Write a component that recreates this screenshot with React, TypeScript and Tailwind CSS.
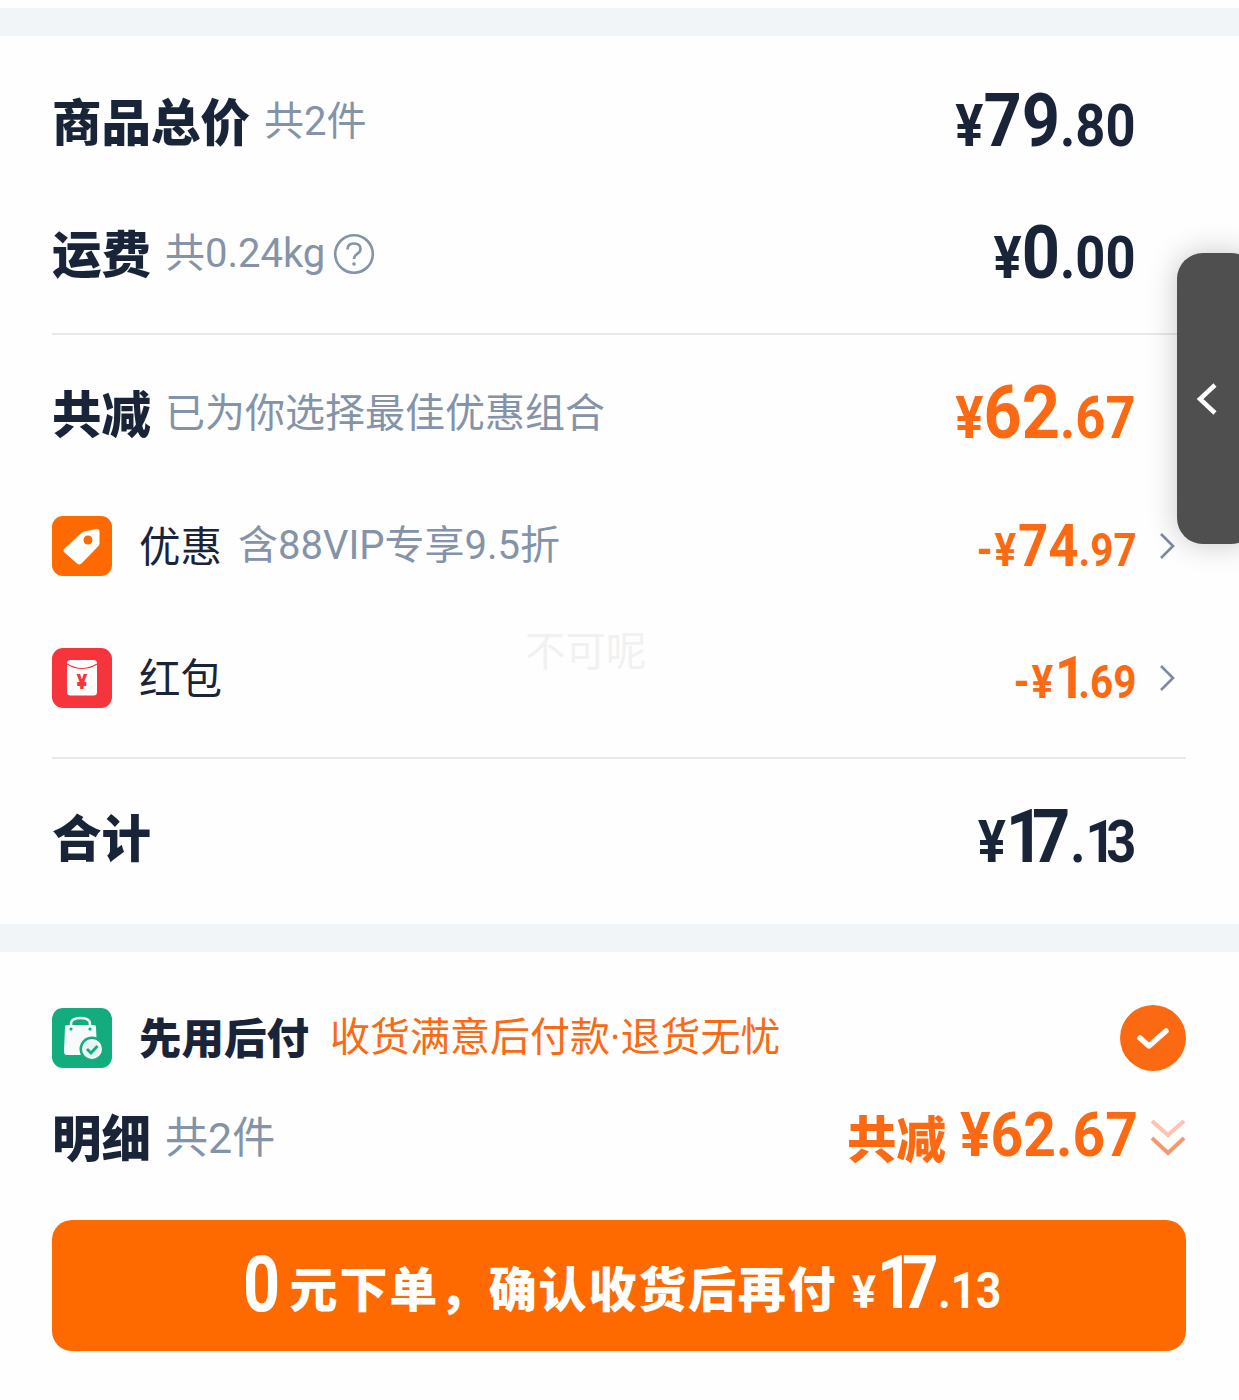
import React from "react";

const DARK = "text-[#1a2438]";
const ORANGE = "text-[#fb6a12]";

function Digits({ s, loose }: { s: string; loose?: boolean }) {
  return (
    <>
      {s.split("").map((c, i) =>
        c === "1" ? (
          <span key={i} className={loose ? "tracking-[-0.13em]" : "tracking-[-0.18em]"}>1</span>
        ) : (
          <span key={i}>{c}</span>
        ),
      )}
    </>
  );
}

function Price({ big, small, color }: { big: string; small: string; color: string }) {
  return (
    <div className={`font-['Roboto',sans-serif] font-bold leading-none whitespace-nowrap inline-block origin-right scale-x-[0.89] pb-[3px] ${color}`}>
      <span className="text-[59px]">¥</span>
      <span className="text-[75px]"><Digits s={big} /></span>
      <span className="text-[59px]"><Digits s={small} /></span>
    </div>
  );
}

function SmallPrice({ big, small }: { big: string; small: string }) {
  return (
    <div className={`font-['Roboto',sans-serif] font-bold leading-none whitespace-nowrap inline-block origin-right scale-x-[0.88] ${ORANGE}`}>
      <span className="text-[46px] tracking-[2px]">-¥</span>
      <span className="text-[60px]"><Digits s={big} loose /></span>
      <span className="text-[46px]">{small}</span>
    </div>
  );
}

const cjk = "font-['Roboto','Noto_Sans_CJK_SC',sans-serif]";
const cjkSans = "font-['Noto_Sans_CJK_SC',sans-serif]";

function Title({ children }: { children: React.ReactNode }) {
  return <span className={`${cjkSans} text-[49.5px] font-black leading-none pb-[5px] ${DARK}`}>{children}</span>;
}
function Sub({ children, big }: { children: React.ReactNode; big?: boolean }) {
  return <span className={`${cjk} ${big ? "text-[43px]" : "text-[40px]"} leading-none text-[#8493a8]`}>{children}</span>;
}

function Chevron() {
  return (
    <svg width="16" height="28" viewBox="0 0 16 28" fill="none" className="shrink-0">
      <path d="M2 2 L14 14 L2 26" stroke="#7b8aa0" strokeWidth="2.6" />
    </svg>
  );
}

function TagIcon() {
  return (
    <svg width="60" height="60" viewBox="0 0 60 60" className="shrink-0">
      <rect width="60" height="60" rx="11" fill="#ff6a00" />
      <path d="M32 15.5 L44 13 Q47.5 12.5 47.5 16 L47.5 27 Q47.5 29 46 30.5 L30 47 Q27.5 49.5 25 47.5 L12.5 36.5 Q10.5 34.5 12.5 32.5 L29.5 17 Q30.5 16 32 15.5 Z" fill="#fff" />
      <circle cx="36" cy="24" r="4.5" fill="#ff6a00" />
    </svg>
  );
}

function PacketIcon() {
  return (
    <svg width="60" height="60" viewBox="0 0 60 60" className="shrink-0">
      <rect width="60" height="60" rx="11" fill="#f5343c" />
      <rect x="15" y="12" width="30" height="35.5" rx="3.5" fill="#fff" />
      <path d="M15 16 Q30 25 45 16" stroke="#f5343c" strokeWidth="1.2" fill="none" />
      <text x="30" y="41" textAnchor="middle" fontSize="20" fontWeight="900" fill="#f5343c" fontFamily="Roboto, sans-serif">¥</text>
    </svg>
  );
}

function BagIcon() {
  return (
    <svg width="60" height="60" viewBox="0 0 60 60" className="shrink-0">
      <rect width="60" height="60" rx="11" fill="#12ac7e" />
      <path d="M15 17 L42 17 Q44 17 44 19 L45 42 Q45 47 41 47 L15 47 Q12 47 12 44 L13 19 Q13 17 15 17 Z" fill="#f4fbf9" />
      <path d="M19 22 L19 16 Q19 10 28.5 10 Q38 10 38 16 L38 22" stroke="#f4fbf9" strokeWidth="2.4" fill="none" />
      <circle cx="19" cy="21" r="1.6" fill="#12ac7e" />
      <circle cx="38" cy="21" r="1.6" fill="#12ac7e" />
      <circle cx="40" cy="41" r="12.5" fill="#12ac7e" />
      <circle cx="40" cy="41" r="9" fill="#e4f6f0" stroke="#fff" strokeWidth="2" />
      <path d="M35 41 L39 45 L45.5 38" stroke="#12ac7e" strokeWidth="2.8" fill="none" />
    </svg>
  );
}

function QuestionIcon() {
  return (
    <svg width="42" height="42" viewBox="0 0 42 42" fill="none" className="shrink-0">
      <circle cx="21" cy="21" r="18.8" stroke="#8493a8" strokeWidth="2.6" />
      <path d="M14.5 16.5 Q14.5 10.5 21 10.5 Q27.5 10.5 27.5 16 Q27.5 19 24 21 Q21 23 21 26" stroke="#8493a8" strokeWidth="2.6" />
      <circle cx="21" cy="31" r="1.8" fill="#8493a8" />
    </svg>
  );
}

function Row({ left, right }: { left: React.ReactNode; right: React.ReactNode }) {
  return (
    <div className="h-[132px] flex items-center justify-between pr-[50px]">
      <div className="flex items-center gap-[14px]">{left}</div>
      <div>{right}</div>
    </div>
  );
}

function IconRow({ icon, label, sub, big, small }: { icon: React.ReactNode; label: string; sub?: string; big: string; small: string }) {
  return (
    <div className="h-[132px] flex items-center justify-between pr-[11px]">
      <div className="flex items-center">
        {icon}
        <span className={`${cjkSans} ml-[27px] pb-[3px] text-[41.5px] leading-none ${DARK}`}>{label}</span>
        {sub && <span className="ml-4"><Sub>{sub}</Sub></span>}
      </div>
      <div className="flex items-center gap-[22px]">
        <SmallPrice big={big} small={small} />
        <Chevron />
      </div>
    </div>
  );
}

function Divider() {
  return <div className="h-[2px] my-[13px] bg-[#e6e8ec]" />;
}

export default function App() {
  return (
    <div className="relative w-[1239px] h-[1400px] overflow-hidden bg-[#fefefe]">
      <div className="h-2" />
      <div className="h-[28px] bg-[#f1f5f8]" />

      <section className="pl-[52px] pr-[53px] py-5">
        <Row
          left={<><Title>商品总价</Title><Sub>共2件</Sub></>}
          right={<Price big="79" small=".80" color={DARK} />}
        />
        <Row
          left={<><Title>运费</Title><Sub>共0.24kg</Sub><span className="-ml-[6px]"><QuestionIcon /></span></>}
          right={<Price big="0" small=".00" color={DARK} />}
        />
        <Divider />
        <Row
          left={<><Title>共减</Title><Sub>已为你选择最佳优惠组合</Sub></>}
          right={<Price big="62" small=".67" color={ORANGE} />}
        />
        <IconRow icon={<TagIcon />} label="优惠" sub="含88VIP专享9.5折" big="74" small=".97" />
        <IconRow icon={<PacketIcon />} label="红包" big="1" small=".69" />
        <Divider />
        <Row
          left={<Title>合计</Title>}
          right={<Price big="17" small=".13" color={DARK} />}
        />
      </section>

      <div className="h-[28px] bg-[#f1f5f8]" />

      <section className="pl-[52px] pr-[53px] pt-[53px]">
        <div className="h-[66px] flex items-center justify-between">
          <div className="flex items-center">
            <BagIcon />
            <span className={`${cjkSans} ml-[27px] pb-[4px] text-[42.5px] font-black leading-none ${DARK}`}>先用后付</span>
            <span className={`${cjk} ml-[21px] text-[40px] leading-none ${ORANGE}`}>收货满意后付款·退货无忧</span>
          </div>
          <div className="w-[66px] h-[66px] rounded-full bg-[#fb6a12] flex items-center justify-center">
            <svg width="34" height="26" viewBox="0 0 34 26" fill="none">
              <path d="M4 13 L13 21 L30 6" stroke="#fff" strokeWidth="5.5" strokeLinecap="round" strokeLinejoin="round" />
            </svg>
          </div>
        </div>

        <div className="mt-[34px] h-[66px] flex items-center justify-between">
          <div className="flex items-center gap-[14px]">
            <Title>明细</Title>
            <Sub big>共2件</Sub>
          </div>
          <div className="flex items-center">
            <span className={`${cjkSans} text-[49.5px] font-black leading-none pb-[2px] ${ORANGE}`}>共减</span>
            <span className={`font-['Roboto',sans-serif] ml-[14px] pb-[6px] text-[62px] font-bold leading-none inline-block origin-left scale-x-[0.92] w-[176px] whitespace-nowrap ${ORANGE}`}>¥62.67</span>
            <svg width="36" height="38" viewBox="0 0 36 38" fill="none" className="ml-[14px]">
              <path d="M2 2 L18 16 L34 2" stroke="#ffc4b0" strokeWidth="4" />
              <path d="M2 19 L18 34 L34 19" stroke="#f59a70" strokeWidth="4" />
            </svg>
          </div>
        </div>

        <button className="mt-[49px] w-full h-[131px] rounded-[20px] bg-[#ff6a00] flex items-center justify-center pl-[5px] text-white">
          <span className="flex items-baseline whitespace-nowrap font-['Roboto',sans-serif] font-bold">
            <span className="text-[77px] leading-none inline-block origin-left scale-x-[0.84] w-[37px]">0</span>
            <span className={`${cjkSans} ml-[10px] -translate-y-[4px] font-black text-[48px] leading-none tracking-[1.8px]`}>元下单，确认收货后再付</span>
            <span className="ml-[13px] -translate-y-[3px] text-[46px] leading-none inline-block w-[27px]">¥</span>
            <span className="-translate-y-[3px] text-[75px] leading-none inline-block origin-left scale-x-[0.85] w-[61px]"><Digits s="17" /></span>
            <span className="-translate-y-[3px] text-[50px] leading-none inline-block origin-left scale-x-[0.88] w-[62px]">.13</span>
          </span>
        </button>
      </section>

      {/* watermark */}
      <div className={`${cjkSans} absolute left-[525px] top-[625px] text-[40.5px] leading-[48px] text-[#f1f1f1] [text-shadow:1px_1px_0_#fff]`}>不可呢</div>

      {/* floating side tab */}
      <div className="absolute left-[1177px] top-[253px] w-[80px] h-[291px] rounded-[26px] bg-[#4f4f4f] shadow-[0_0_30px_rgba(0,0,0,0.22)] flex items-center pl-[18px]">
        <svg width="24" height="34" viewBox="0 0 24 34" fill="none">
          <path d="M20 3 L5 17 L20 31" stroke="#fff" strokeWidth="4.5" />
        </svg>
      </div>
    </div>
  );
}
